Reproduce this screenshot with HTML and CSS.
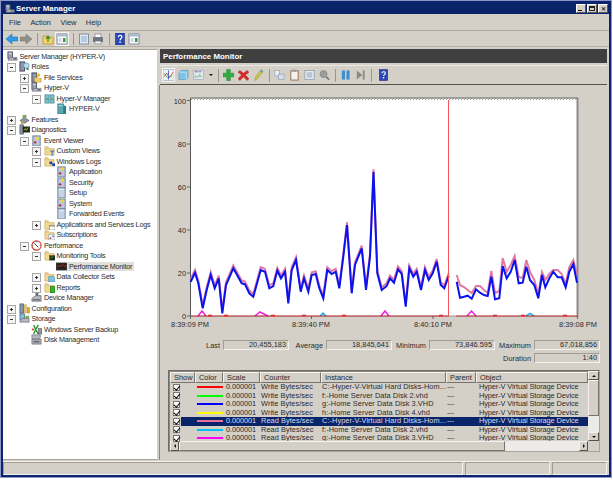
FILE: index.html
```html
<!DOCTYPE html>
<html lang="en">
<head>
<meta charset="utf-8">
<title>Server Manager</title>
<link rel="stylesheet" href="styles.css">
</head>
<body>
<svg class="defs" width="0" height="0" aria-hidden="true">
<defs>
<symbol id="i-server" viewBox="0 0 12 12"><rect x="1" y="1" width="5" height="7" fill="#9aa5b4" stroke="#556"/><rect x="2" y="2" width="3" height="1" fill="#eef"/><path d="M3 7h8v3H1z" fill="#b8bcc2" stroke="#667" stroke-width=".7"/><rect x="7" y="8" width="3" height="1" fill="#444"/></symbol>
<symbol id="i-roles" viewBox="0 0 12 12"><rect x="1" y="1" width="5" height="10" fill="#8b99ad" stroke="#445"/><circle cx="8" cy="5" r="3" fill="#bcd9ef" stroke="#4a86b8" stroke-width=".7"/><path d="M7 9l3-2 1 3z" fill="#3f8a3f"/></symbol>
<symbol id="i-files" viewBox="0 0 12 12"><rect x="1" y="1" width="5" height="10" fill="#8b99ad" stroke="#445"/><path d="M4 6h3l1 1h3v4H4z" fill="#f2cf6d" stroke="#b48a2c" stroke-width=".6"/><circle cx="8" cy="3.500" r="2" fill="#e9b93a"/></symbol>
<symbol id="i-mgr" viewBox="0 0 12 12"><rect x="1" y="2" width="4.500" height="4" fill="#7fc0c4" stroke="#3d8288" stroke-width=".7"/><rect x="6.500" y="2" width="4.500" height="4" fill="#7fc0c4" stroke="#3d8288" stroke-width=".7"/><rect x="1" y="7" width="4.500" height="4" fill="#7fc0c4" stroke="#3d8288" stroke-width=".7"/><rect x="6.500" y="7" width="4.500" height="4" fill="#7fc0c4" stroke="#3d8288" stroke-width=".7"/></symbol>
<symbol id="i-host" viewBox="0 0 12 12"><rect x="2" y="1" width="6" height="11" fill="#58a7ae" stroke="#2d6a70" stroke-width=".7"/><rect x="8" y="3" width="3" height="9" fill="#2f7d85"/><rect x="3" y="2.500" width="4" height="1" fill="#c7e6e8"/></symbol>
<symbol id="i-feat" viewBox="0 0 12 12"><path d="M1 7l5-3 5 3-5 3z" fill="#8d97a6" stroke="#445" stroke-width=".6"/><rect x="4" y="1" width="4" height="4" fill="#79a45d"/><rect x="2" y="8" width="3" height="3" fill="#c8a54a"/></symbol>
<symbol id="i-diag" viewBox="0 0 12 12"><rect x="1" y="1" width="4" height="10" fill="#8b99ad" stroke="#445" stroke-width=".7"/><rect x="4" y="3" width="8" height="6" fill="#1d2a1c" stroke="#555" stroke-width=".5"/><path d="M5 7l2-2 1 2 2-3" fill="none" stroke="#e8d23a" stroke-width=".8"/></symbol>
<symbol id="i-log" viewBox="0 0 12 12"><rect x="2" y="1" width="8" height="11" fill="#b9c9e0" stroke="#6d7c96"/><path d="M7 1l1 1.500 1.500.5-1 1 .2 1.500L7 5l-1.500.5.3-1.500-1-1 1.400-.5z" fill="#f6d52e"/><circle cx="4.500" cy="8" r="1.300" fill="#c8232c"/></symbol>
<symbol id="i-doc" viewBox="0 0 12 12"><rect x="2" y="1" width="8" height="11" fill="#c5d3e6" stroke="#6d7c96"/><rect x="3" y="2" width="6" height="1" fill="#edf3fa"/></symbol>
<symbol id="i-folder" viewBox="0 0 12 12"><path d="M1 3h4l1 1h5v7H1z" fill="#f4d98d" stroke="#c3a45a" stroke-width=".7"/><path d="M1 1.500h3l1 1.500H1z" fill="#f9e9b8" stroke="#c3a45a" stroke-width=".5"/></symbol>
<symbol id="i-fcustom" viewBox="0 0 12 12"><use href="#i-folder"/><path d="M6 6h6l-2.300 2.500V12H8.300V8.500z" fill="#5a8fb3"/></symbol>
<symbol id="i-fwin" viewBox="0 0 12 12"><use href="#i-folder"/><rect x="6" y="6" width="3" height="3" fill="#1c3fb0"/><rect x="9" y="8" width="3" height="3" fill="#1c3fb0"/></symbol>
<symbol id="i-fapp" viewBox="0 0 12 12"><use href="#i-folder"/><rect x="6" y="7" width="6" height="5" fill="#fff" stroke="#667" stroke-width=".6"/><rect x="6" y="7" width="6" height="1.300" fill="#99a"/></symbol>
<symbol id="i-fsub" viewBox="0 0 12 12"><use href="#i-folder"/><rect x="5" y="6" width="7" height="6" fill="#eef3fa" stroke="#8aa" stroke-width=".6"/><circle cx="7" cy="10" r="1" fill="#d33"/><circle cx="10" cy="8" r="1" fill="#38c"/></symbol>
<symbol id="i-fmon" viewBox="0 0 12 12"><use href="#i-folder"/><rect x="6" y="6" width="6" height="5" fill="#1d2a1c" stroke="#444" stroke-width=".5"/><path d="M7 9l1-1.500 1 1 1-1.500" fill="none" stroke="#5d5" stroke-width=".6"/></symbol>
<symbol id="i-fdcs" viewBox="0 0 12 12"><use href="#i-folder"/><path d="M5 6h5l2 2v4H5z" fill="#7cc1e8" stroke="#4788b0" stroke-width=".6"/></symbol>
<symbol id="i-frep" viewBox="0 0 12 12"><use href="#i-folder"/><rect x="7" y="5" width="5" height="7" fill="#2bb52b" stroke="#166a16" stroke-width=".6"/></symbol>
<symbol id="i-perf" viewBox="0 0 12 12"><circle cx="6" cy="6" r="5" fill="#fff" stroke="#c33" stroke-width="1.200"/><path d="M3.500 3.500L8 8" stroke="#333" stroke-width="1"/><path d="M6 1v2M1 6h2M9 6h2" stroke="#777" stroke-width=".6"/></symbol>
<symbol id="i-pm" viewBox="0 0 12 12"><rect x="0" y="2" width="12" height="8" fill="#26211f" stroke="#6b6b6b" stroke-width=".6"/><path d="M1 7l2-2 2 1 2-2 2 2 2-1" fill="none" stroke="#e33" stroke-width=".8"/></symbol>
<symbol id="i-dev" viewBox="0 0 12 12"><path d="M1 7l4-3h6v6H1z" fill="#b5bac1" stroke="#556" stroke-width=".7"/><path d="M5 1h3v3H5z" fill="#667"/><rect x="2" y="8" width="8" height="1" fill="#555"/></symbol>
<symbol id="i-conf" viewBox="0 0 12 12"><rect x="1" y="1" width="4" height="10" fill="#8b99ad" stroke="#445" stroke-width=".7"/><rect x="6" y="2" width="2" height="9" fill="#e8c54c" stroke="#a7842a" stroke-width=".4"/><rect x="9" y="5" width="2.500" height="6" fill="#e9a32b" stroke="#a7742a" stroke-width=".4"/></symbol>
<symbol id="i-stor" viewBox="0 0 12 12"><rect x="1" y="1" width="5" height="6" fill="#8bbfd9" stroke="#456" stroke-width=".7"/><path d="M1 8l3-2h7v4H1z" fill="#b3b9c1" stroke="#556" stroke-width=".6"/><rect x="7" y="3" width="4" height="3" fill="#6cb15a"/></symbol>
<symbol id="i-bak" viewBox="0 0 12 12"><path d="M3 1l2 5-2 5M8 1l-3 5 3 5" fill="none" stroke="#2e9c35" stroke-width="1.600"/><rect x="8" y="5" width="4" height="6" fill="#8f97a3" stroke="#444" stroke-width=".5"/><circle cx="2" cy="6" r="1.200" fill="#d33"/></symbol>
<symbol id="i-disk" viewBox="0 0 12 12"><rect x="1" y="1" width="9" height="4" fill="#b5bac1" stroke="#556" stroke-width=".6"/><rect x="1" y="6" width="10" height="5" fill="#a6acb4" stroke="#556" stroke-width=".6"/><rect x="3" y="8" width="6" height="1" fill="#444"/></symbol>
<symbol id="t-back" viewBox="0 0 12 12"><path d="M0 6l6-5v3h6v4H6v3z" fill="#2f9be6" stroke="#1b6eb0" stroke-width=".5"/></symbol>
<symbol id="t-fwd" viewBox="0 0 12 12"><path d="M12 6L6 1v3H0v4h6v3z" fill="#8f8f8a" stroke="#777" stroke-width=".5"/></symbol>
<symbol id="t-up" viewBox="0 0 12 12"><path d="M1 3h4l1 1h5v7H1z" fill="#f4d46d" stroke="#b08a2a" stroke-width=".7"/><path d="M6 9V4M4 6l2-3 2 3" fill="none" stroke="#2c8a2c" stroke-width="1.200"/></symbol>
<symbol id="t-con" viewBox="0 0 12 12"><rect x="1" y="1" width="10" height="10" fill="#fff" stroke="#7f8a96"/><rect x="1" y="1" width="10" height="2.500" fill="#a9bccf"/><rect x="7" y="5" width="2.500" height="4" fill="#2f9c45"/><rect x="2.500" y="5" width="3" height="4" fill="#cfd8e2"/></symbol>
<symbol id="t-list" viewBox="0 0 12 12"><rect x="1.500" y="1" width="9" height="10" fill="#dfe9f3" stroke="#80909f"/><rect x="3" y="3" width="6" height="6" fill="#b3cce2"/></symbol>
<symbol id="t-print" viewBox="0 0 12 12"><rect x="3" y="1" width="6" height="4" fill="#fff" stroke="#667" stroke-width=".6"/><rect x="1" y="4" width="10" height="5" fill="#6f7780"/><rect x="3" y="8" width="6" height="3" fill="#eee" stroke="#667" stroke-width=".5"/></symbol>
<symbol id="t-help" viewBox="0 0 12 12"><rect x="1.500" y="0" width="9" height="12" fill="#2b48b4" stroke="#1a2c7a" stroke-width=".6"/><path d="M4.300 4.200c0-2.400 3.600-2.400 3.600-.2 0 1.500-1.800 1.600-1.800 3.200" fill="none" stroke="#fff" stroke-width="1.200"/><rect x="5.300" y="8.300" width="1.500" height="1.500" fill="#fff"/></symbol>
</defs>
</svg>

<div class="window">
  <div class="titlebar">
    <svg class="title-icon"><use href="#i-server"/></svg>
    <span class="title-text">Server Manager</span>
    <span class="caps">
      <span class="cap"><i class="cap-min"></i></span>
      <span class="cap"><i class="cap-max"></i></span>
      <span class="cap cap-x">✕</span>
    </span>
  </div>
  <div class="menubar"><span>File</span><span>Action</span><span>View</span><span>Help</span></div>
  <div class="toolbar top-tools">
    <svg class="ti"><use href="#t-back"/></svg>
    <svg class="ti"><use href="#t-fwd"/></svg>
    <i class="sep"></i>
    <svg class="ti"><use href="#t-up"/></svg>
    <span class="pressed"><svg class="ti"><use href="#t-con"/></svg></span>
    <i class="sep"></i>
    <svg class="ti"><use href="#t-list"/></svg>
    <svg class="ti"><use href="#t-print"/></svg>
    <i class="sep"></i>
    <svg class="ti"><use href="#t-help"/></svg>
    <svg class="ti"><use href="#t-con"/></svg>
  </div>

  <div class="main">
    <div class="tree">
      <div class="node d0"><i class="tg"></i><svg class="ni"><use href="#i-server"/></svg><span>Server Manager (HYPER-V)</span></div>
      <div class="node d1"><i class="tg minus"></i><svg class="ni"><use href="#i-roles"/></svg><span>Roles</span></div>
      <div class="node d2"><i class="tg plus"></i><svg class="ni"><use href="#i-files"/></svg><span>File Services</span></div>
      <div class="node d2"><i class="tg minus"></i><svg class="ni"><use href="#i-server"/></svg><span>Hyper-V</span></div>
      <div class="node d3"><i class="tg minus"></i><svg class="ni"><use href="#i-mgr"/></svg><span>Hyper-V Manager</span></div>
      <div class="node d4"><i class="tg"></i><svg class="ni"><use href="#i-host"/></svg><span>HYPER-V</span></div>
      <div class="node d1"><i class="tg plus"></i><svg class="ni"><use href="#i-feat"/></svg><span>Features</span></div>
      <div class="node d1"><i class="tg minus"></i><svg class="ni"><use href="#i-diag"/></svg><span>Diagnostics</span></div>
      <div class="node d2"><i class="tg minus"></i><svg class="ni"><use href="#i-log"/></svg><span>Event Viewer</span></div>
      <div class="node d3"><i class="tg plus"></i><svg class="ni"><use href="#i-fcustom"/></svg><span>Custom Views</span></div>
      <div class="node d3"><i class="tg minus"></i><svg class="ni"><use href="#i-fwin"/></svg><span>Windows Logs</span></div>
      <div class="node d4"><i class="tg"></i><svg class="ni"><use href="#i-log"/></svg><span>Application</span></div>
      <div class="node d4"><i class="tg"></i><svg class="ni"><use href="#i-log"/></svg><span>Security</span></div>
      <div class="node d4"><i class="tg"></i><svg class="ni"><use href="#i-doc"/></svg><span>Setup</span></div>
      <div class="node d4"><i class="tg"></i><svg class="ni"><use href="#i-log"/></svg><span>System</span></div>
      <div class="node d4"><i class="tg"></i><svg class="ni"><use href="#i-doc"/></svg><span>Forwarded Events</span></div>
      <div class="node d3"><i class="tg plus"></i><svg class="ni"><use href="#i-fapp"/></svg><span>Applications and Services Logs</span></div>
      <div class="node d3"><i class="tg"></i><svg class="ni"><use href="#i-fsub"/></svg><span>Subscriptions</span></div>
      <div class="node d2"><i class="tg minus"></i><svg class="ni"><use href="#i-perf"/></svg><span>Performance</span></div>
      <div class="node d3"><i class="tg minus"></i><svg class="ni"><use href="#i-fmon"/></svg><span>Monitoring Tools</span></div>
      <div class="node d4"><i class="tg"></i><svg class="ni"><use href="#i-pm"/></svg><span class="current">Performance Monitor</span></div>
      <div class="node d3"><i class="tg plus"></i><svg class="ni"><use href="#i-fdcs"/></svg><span>Data Collector Sets</span></div>
      <div class="node d3"><i class="tg plus"></i><svg class="ni"><use href="#i-frep"/></svg><span>Reports</span></div>
      <div class="node d2"><i class="tg"></i><svg class="ni"><use href="#i-dev"/></svg><span>Device Manager</span></div>
      <div class="node d1"><i class="tg plus"></i><svg class="ni"><use href="#i-conf"/></svg><span>Configuration</span></div>
      <div class="node d1"><i class="tg minus"></i><svg class="ni"><use href="#i-stor"/></svg><span>Storage</span></div>
      <div class="node d2"><i class="tg"></i><svg class="ni"><use href="#i-bak"/></svg><span>Windows Server Backup</span></div>
      <div class="node d2"><i class="tg"></i><svg class="ni"><use href="#i-disk"/></svg><span>Disk Management</span></div>
    </div>

    <div class="pane">
      <div class="pane-head">Performance Monitor</div>
      <div class="toolbar pane-tools">
        <span class="pressed"><svg class="ti" viewBox="0 0 12 12"><rect x="0" y="0" width="12" height="12" fill="#eef3f8" stroke="#8ca0b5" stroke-width=".6"/><path d="M1 8l3-4 3 5 4-6" fill="none" stroke="#d33" stroke-width=".9"/><path d="M1 4l4 5 5-2" fill="none" stroke="#3a3" stroke-width=".9"/><path d="M6 1v10" stroke="#35b" stroke-width=".9"/></svg></span>
        <svg class="ti" viewBox="0 0 12 12"><path d="M1 3l3-2h7v8l-2 2H1z" fill="#7cc4ea" stroke="#4a90b8" stroke-width=".6"/><path d="M1 3h8v8" fill="none" stroke="#d5eefa" stroke-width=".7"/></svg>
        <svg class="ti" viewBox="0 0 12 12"><rect x="0.500" y="1" width="11" height="10" fill="#dfe8f2" stroke="#8ca0b5" stroke-width=".6"/><rect x="2" y="2" width="3" height="1" fill="#c36"/><rect x="6" y="2" width="3" height="1" fill="#58b"/><path d="M1 9l2-3 2 2 2-3 3 3" fill="#9cc69c"/></svg>
        <i class="caret"></i>
        <i class="sep"></i>
        <svg class="ti" viewBox="0 0 12 12"><path d="M4 0h4v4h4v4H8v4H4V8H0V4h4z" fill="#2fae3f" stroke="#1c7a2a" stroke-width=".5"/></svg>
        <svg class="ti" viewBox="0 0 12 12"><path d="M2 1l4 3 4-3 2 2-4 3 4 4-2 2-4-4-4 4-2-2 4-4-4-3z" fill="#d7262b" stroke="#a31a1e" stroke-width=".4"/></svg>
        <svg class="ti" viewBox="0 0 12 12"><path d="M9 0l2 2-6 8-3 2 .5-3.500z" fill="#c9c94a" stroke="#8e8c33" stroke-width=".5"/><path d="M9 0l2 2-1.500 2-2-2z" fill="#6f9bd0"/></svg>
        <i class="sep"></i>
        <svg class="ti" viewBox="0 0 12 12"><rect x="1" y="1" width="5" height="6" fill="#eef1f5" stroke="#8fa0b4" stroke-width=".7"/><rect x="5" y="5" width="6" height="6" fill="#d6dee8" stroke="#8fa0b4" stroke-width=".7"/></svg>
        <svg class="ti" viewBox="0 0 12 12"><rect x="2" y="1.500" width="8" height="10" fill="#f2f2f2" stroke="#94653a" stroke-width="1"/><rect x="4" y="0" width="4" height="2.500" fill="#8fa0b4"/></svg>
        <svg class="ti" viewBox="0 0 12 12"><rect x="1" y="1" width="10" height="10" fill="#e7ecf2" stroke="#8c98a6" stroke-width=".8"/><rect x="3" y="3" width="6" height="6" fill="#b7c6d6"/></svg>
        <svg class="ti" viewBox="0 0 12 12"><circle cx="5" cy="5" r="3.800" fill="#9b9b9b" stroke="#8a8a8a"/><path d="M8 8l3 3" stroke="#777" stroke-width="1.800"/></svg>
        <i class="sep"></i>
        <svg class="ti" viewBox="0 0 12 12"><rect x="2" y="1" width="3.500" height="10" fill="#3f8fd0"/><rect x="7" y="1" width="3.500" height="10" fill="#3f8fd0"/></svg>
        <svg class="ti" viewBox="0 0 12 12"><path d="M2 1l6 5-6 5z" fill="#8a8a86"/><rect x="8.500" y="1" width="2" height="10" fill="#8a8a86"/></svg>
        <i class="sep"></i>
        <svg class="ti"><use href="#t-help"/></svg>
      </div>

      <div class="pane-body">
        <svg class="chart" viewBox="160 85 447 250">
          <defs>
            <pattern id="hatch" width="3" height="3" patternUnits="userSpaceOnUse"><rect width="3" height="3" fill="#fff"/><path d="M0 3L3 0" stroke="#888" stroke-width=".8"/></pattern>
            <polyline id="seg1" points="190.700,281.700 195,272.700 198.300,283.300 202.700,308.300 206.700,290 210.700,275 214.700,288.300 218.700,278.300 222.300,313.300 226,285 233.300,268.300 241.700,283.300 245,284.300 249.300,293.300 253.300,296.700 260.700,270 265,271.700 269.300,288.300 273.300,286 277.300,270.700 281,278.300 285,271.700 288.300,303.300 291.700,270 296,260 300.700,291.700 304,278.300 308.300,291.700 311.700,275 315.700,274 319.300,288.300 323.300,298.300 327.300,270 331.700,274 335.700,271.700 339.300,288.300 343.300,256.700 347,225 351.700,293.300 355,265 361.700,248.300 366,290 370,256.700 373.500,172 377.300,273.300 381.700,290 386.700,286 390,278.300 394,282.700 398,269.300 401.700,274 405.700,306.700 409.300,268.300 413.300,276.700 416.700,271.700 421,290 425,270 428.700,280 432.700,273.300 436.700,261.700 440.700,285 444.300,288.300 448.700,276"/>
          </defs>
          <rect x="191" y="98" width="387" height="2" fill="url(#hatch)"/>
          <rect x="191" y="100" width="386" height="216" fill="#fff"/>
          <path d="M190.500 98V317" class="axis"/>
          <path d="M190.500 98H578" class="axis-thin"/>
          <path d="M577.500 98V317" class="axis-right"/>
          <path d="M187 100.500h4M187 144h4M187 187h4M187 230h4M187 273h4M187 316h4M190.500 316v3M311.500 316v3M433 316v3M577.500 316v3" class="axis-thin"/>
          <use href="#seg1" class="line-pink" transform="translate(0 -2.800)"/>
          <polyline class="line-pink" points="456.700,275 460,285 464,287 467.700,290 471.700,293 476,286 480,286 484,290 487.700,293 491.300,271 495,293 499.300,291 502.700,258 506.700,272 510.700,265 514.700,256 518.700,277 522.700,278 526.300,260 530,272 534.300,280 538.300,294 542,272 545.300,280 549.300,274 553.300,270 557.700,270 561.700,274 565.700,284 569.300,267 573.300,260 577,274"/>
          <use href="#seg1" class="line-blue"/>
          <polyline class="line-blue" points="456.700,281.700 460,297.700 464,296.700 467.700,295.700 471.700,298.700 476,289.300 480,292.700 484,295 487.700,296 491.300,276.700 495,299.300 499.300,298.300 502.700,266 506.700,278.300 510.700,271.700 514.700,260 518.700,283.300 522.700,282.700 526.300,266.700 530,280 534.300,285 538.300,298.300 542,275 545.300,287.300 549.300,278.300 553.300,271.700 557.700,277.300 561.700,277.300 565.700,287.300 569.300,271.700 573.300,264 577,282.700"/>
          <path d="M198 316l4-5 4 5M255 316l5-4 8 4M381 316l4-5 4 5M467 316l4.500-5 4.500 5" class="hump-m"/>
          <path d="M320 316l3-3 3 3M526 316l4-2.500 4 2.500" class="hump-c"/>
          <path d="M191 316H449M456 316H577" class="base"/>
          <path d="M449 316H456" class="base-gap"/>
          <path d="M208 315.500h4M224 315.500h4M271 315.500h4M302 315.500h4M342 315.500h4M439 315.500h4M493 315.500h4M521 315.500h4M563 315.500h4" class="base-red"/>
          <path d="M448.500 100V316" class="cursor"/>
          <text x="186" y="104" class="ylab">100</text>
          <text x="186" y="147" class="ylab">80</text>
          <text x="186" y="190" class="ylab">60</text>
          <text x="186" y="233" class="ylab">40</text>
          <text x="186" y="276" class="ylab">20</text>
          <text x="186" y="319" class="ylab">0</text>
          <text x="190" y="327" class="xlab">8:39:09 PM</text>
          <text x="311" y="327" class="xlab">8:39:40 PM</text>
          <text x="433" y="327" class="xlab">8:40:10 PM</text>
          <text x="578" y="327" class="xlab">8:39:08 PM</text>
        </svg>

        <div class="stats">
          <div class="stat"><span>Last</span><b>20,455,183</b></div>
          <div class="stat"><span>Average</span><b>18,845,641</b></div>
          <div class="stat"><span>Minimum</span><b>73,846.595</b></div>
          <div class="stat"><span>Maximum</span><b>67,018,856</b></div>
          <div class="stat stat-last"><span>Duration</span><b>1:40</b></div>
        </div>

        <div class="list">
          <div class="list-top">
            <div class="list-main">
              <div class="grid head"><span>Show</span><span>Color</span><span>Scale</span><span>Counter</span><span>Instance</span><span>Parent</span><span>Object</span></div>
              <div class="grid row"><i class="chk"></i><em class="sw red"></em><span>0.000001</span><span>Write Bytes/sec</span><span>C:-Hyper-V-Virtual Hard Disks-Hom...</span><span>---</span><span>Hyper-V Virtual Storage Device</span></div>
              <div class="grid row"><i class="chk"></i><em class="sw lime"></em><span>0.000001</span><span>Write Bytes/sec</span><span>f:-Home Server Data Disk 2.vhd</span><span>---</span><span>Hyper-V Virtual Storage Device</span></div>
              <div class="grid row"><i class="chk"></i><em class="sw blue"></em><span>0.000001</span><span>Write Bytes/sec</span><span>g:-Home Server Data Disk 3.VHD</span><span>---</span><span>Hyper-V Virtual Storage Device</span></div>
              <div class="grid row"><i class="chk"></i><em class="sw yellow"></em><span>0.000001</span><span>Write Bytes/sec</span><span>h:-Home Server Data Disk 4.vhd</span><span>---</span><span>Hyper-V Virtual Storage Device</span></div>
              <div class="grid row sel"><i class="chk"></i><em class="sw pink"></em><span>0.000001</span><span>Read Bytes/sec</span><span>C:-Hyper-V-Virtual Hard Disks-Hom...</span><span>---</span><span>Hyper-V Virtual Storage Device</span></div>
              <div class="grid row"><i class="chk"></i><em class="sw cyan"></em><span>0.000001</span><span>Read Bytes/sec</span><span>f:-Home Server Data Disk 2.vhd</span><span>---</span><span>Hyper-V Virtual Storage Device</span></div>
              <div class="grid row"><i class="chk"></i><em class="sw magenta"></em><span>0.000001</span><span>Read Bytes/sec</span><span>g:-Home Server Data Disk 3.VHD</span><span>---</span><span>Hyper-V Virtual Storage Device</span></div>
            </div>
            <div class="vscroll">
              <span class="sbtn"><i class="arr-up"></i></span>
              <span class="vthumb"></span>
              <span class="vtrack"></span>
              <span class="sbtn"><i class="arr-down"></i></span>
            </div>
          </div>
          <div class="hscroll">
            <span class="sbtn"><i class="arr-left"></i></span>
            <span class="hthumb"></span>
            <span class="htrack"></span>
            <span class="sbtn"><i class="arr-right"></i></span>
            <span class="corner"></span>
          </div>
        </div>
      </div>
    </div>
  </div>

  <div class="statusbar"><span class="cell c1"></span><span class="cell c2"></span><span class="cell c3"></span></div>
</div>
</body>
</html>
```
FILE: styles.css
```css
* { box-sizing: border-box; }
html, body { margin: 0; padding: 0; background: #fff; }
body { font-family: "Liberation Sans", Arial, sans-serif; font-size: 7.4px; color: #2a2a2a; width: 613px; height: 480px; overflow: hidden; }
.defs { position: absolute; }
svg { display: block; flex: none; }
i, em { font-style: normal; }

.window { width: 612px; height: 478px; border: 3px solid #0c2470; outline: 1px solid #8d97c8; outline-offset: -1px; background: #d4d0c8; display: flex; flex-direction: column; }

.titlebar { height: 11px; background: #0a246a; display: flex; align-items: center; color: #fff; font-weight: bold; font-size: 7.9px; padding-left: 2px; }
.title-icon { width: 10px; height: 10px; margin-right: 1px; }
.title-text { flex: 1; padding-left: 0; }
.caps { display: flex; gap: 1px; padding-right: 1px; }
.cap { width: 10px; height: 9px; background: #d4d0c8; border: 1px solid; border-color: #fff #555 #555 #fff; display: flex; align-items: center; justify-content: center; color: #222; font-size: 6px; line-height: 1; position: relative; }
.cap-min { width: 4px; height: 1.500px; background: #111; margin-top: 4px; margin-right: 2px; }
.cap-max { width: 6px; height: 5px; border: 1px solid #222; border-top-width: 2px; }

.menubar { height: 17px; border-bottom: 1px solid #aaa69e; display: flex; align-items: center; padding-left: 6px; gap: 9.500px; font-size: 7.400px; }
.toolbar { display: flex; align-items: center; }
.top-tools { height: 16px; padding-left: 3px; gap: 2px; border-bottom: 1px solid #b3afa7; }
.ti { width: 11px; height: 11px; }
.top-tools .ti { width: 12px; height: 12px; }
.sep { width: 1px; height: 12px; background: #9a968e; margin: 0 2.500px; flex: none; }
.pressed { display: block; background: #e8e6e0; box-shadow: 0 0 0 1px #f4f3ef; }

.main { flex: none; height: 411px; margin-top: 2px; display: flex; }

.tree { width: 154px; background: #fff; border: 1px solid #a8a49c; border-width: 1px 0 1px 0; padding-top: 1px; overflow: hidden; font-size: 7.200px; letter-spacing: -.2px; }
.node { height: 10.500px; display: flex; align-items: center; white-space: nowrap; }
.d0 { padding-left: 4px; margin-left: -13px; }
.d0 .tg { width: 12.500px; }
.d1 { padding-left: 4px; }
.d2 { padding-left: 16.500px; }
.d3 { padding-left: 29px; }
.d4 { padding-left: 41.500px; }
.tg { width: 11.500px; height: 7px; flex: none; position: relative; }
.plus::before, .minus::before { content: ""; position: absolute; left: 0; top: 0; width: 7px; height: 7px; border: 1px solid #a6a6a6; background-color: #f6f6f6; background-repeat: no-repeat; background-position: center; }
.minus::before { background-image: linear-gradient(#333, #333); background-size: 3px 1px; }
.plus::before { background-image: linear-gradient(#333, #333), linear-gradient(#333, #333); background-size: 3px 1px, 1px 3px; }
.ni { width: 11px; height: 11px; margin-right: 2px; }
.current { background: #e2e0da; padding: 0 2px; margin-left: -2px; }

.pane { width: 447px; margin-left: 3px; display: flex; flex-direction: column; }
.pane-head { height: 14px; flex: none; background: #3f3f3f; color: #fff; font-weight: bold; font-size: 7.9px; display: flex; align-items: center; padding-left: 3px; }
.pane-tools { height: 20px; flex: none; margin-top: 2px; padding-left: 3px; gap: 4px; border-bottom: 1px solid #55524c; border-top: 1px solid #ebe9e4; }
.pane-tools .ti { width: 11px; height: 12px; }
.pane-tools .sep { height: 13px; margin: 0 0 0 1px; }
.pane-tools .sep:last-of-type { margin-right: 2px; }
.caret { width: 0; height: 0; border: 2px solid transparent; border-top: 2.500px solid #111; border-bottom: 0; margin-left: 1px; }
.pane-body { flex: 1; border-left: 1px solid #888; display: flex; flex-direction: column; min-height: 0; margin-left: -1px; }

.chart { width: 447px; height: 250px; font-size: 7.4px; }
.axis { stroke: #555; stroke-width: 1; fill: none; }
.axis-thin { stroke: #666; stroke-width: 1; fill: none; }
.axis-right { stroke: #8a8a8a; stroke-width: 2; fill: none; }
.line-pink { fill: none; stroke: #e07aa3; stroke-width: 2; }
.line-blue { fill: none; stroke: #0a12ee; stroke-width: 2; }
.hump-m { fill: none; stroke: #f01fe0; stroke-width: 1.500; }
.hump-c { fill: none; stroke: #22b6ec; stroke-width: 1.500; }
.base { stroke: #a8121f; stroke-width: 1; fill: none; }
.base-gap { stroke: #999; stroke-width: 1; fill: none; }
.base-red { stroke: #f01c24; stroke-width: 1.500; fill: none; }
.cursor { stroke: #f4565c; stroke-width: 1; fill: none; }
.ylab { text-anchor: end; fill: #2a2a2a; font-family: "Liberation Sans", Arial, sans-serif; }
.xlab { text-anchor: middle; fill: #2a2a2a; font-family: "Liberation Sans", Arial, sans-serif; }

.stats { margin: 5px 0 0 26px; display: grid; grid-template-columns: repeat(4, 103px); row-gap: 3px; flex: none; }
.stat { display: flex; align-items: center; height: 10px; }
.stat span { width: 34px; text-align: right; margin-right: 3px; flex: none; }
.stat b { flex: none; width: 66px; height: 10px; border: 1px solid; border-color: #a09c94 #f4f3ef #f4f3ef #a09c94; font-weight: normal; text-align: right; padding-right: 2px; line-height: 8px; }
.stat:nth-child(4), .stat-last { margin-left: 2px; }
.stat-last { grid-column: 4; }

.list { margin: 7px 0 0 8px; width: 432px; height: 82px; border: 1px solid; border-color: #6f6c66 #a8a49c #a8a49c #6f6c66; box-shadow: inset 1px 1px 0 #8c8880; flex: none; display: flex; flex-direction: column; }
.list-top { display: flex; flex: 1; min-height: 0; }
.list-main { flex: 1; min-width: 0; padding-left: 1px; }
.grid { display: grid; grid-template-columns: 25px 28px 37px 61px 125px 30px 1fr; white-space: nowrap; }
.head { height: 11px; margin-top: 1px; }
.head span { background: #d4d0c8; border: 1px solid; border-color: #f4f3ef #77746e #77746e #f4f3ef; padding-left: 3px; line-height: 9px; overflow: hidden; }
.row { height: 8.500px; line-height: 8.500px; align-items: center; letter-spacing: -.1px; }
.row span { padding-left: 3px; overflow: hidden; height: 8.500px; }
.row span:nth-of-type(2), .row span:nth-of-type(3) { padding-left: 1px; letter-spacing: .05px; }
.row span:first-of-type { padding-left: 3px; }
.row span:nth-of-type(4) { padding-left: 1px; }
.chk { width: 7px; height: 7px; margin-left: 3px; background: #fff; border: 1px solid #777; position: relative; }
.chk::after { content: ""; position: absolute; left: 1px; top: -1px; width: 2.500px; height: 5px; border: solid #111; border-width: 0 1.500px 1.500px 0; transform: rotate(40deg); }
.sw { display: block; height: 8.500px; position: relative; }
.sw::after { content: ""; position: absolute; left: 3px; right: 0; top: 3px; height: 2px; background: currentColor; }
.red { color: #f00; } .lime { color: #0f0; } .blue { color: #00f; } .yellow { color: #ff0; } .pink { color: #e96f9d; } .cyan { color: #00bfff; } .magenta { color: #f0f; }
.sel { background: linear-gradient(#0a246a, #0a246a) 11px 0 no-repeat; }
.sel span { color: #d8ddf0; }
.chk + .sw { margin-left: -1px; }

.vscroll { width: 11px; flex: none; display: flex; flex-direction: column; }
.sbtn { flex: none; width: 9px; height: 9px; background: #d4d0c8; border: 1px solid; border-color: #f4f3ef #55524c #55524c #f4f3ef; display: flex; align-items: center; justify-content: center; }
.vscroll .sbtn { width: 11px; }
.vthumb { height: 36px; flex: none; background: #d4d0c8; border: 1px solid; border-color: #f4f3ef #77746e #77746e #f4f3ef; }
.vtrack { flex: 1; background: #ecebe7; }
.arr-up, .arr-down, .arr-left, .arr-right { width: 0; height: 0; border: 2px solid transparent; }
.arr-up { border-bottom-color: #111; border-top: 0; }
.arr-down { border-top-color: #111; border-bottom: 0; }
.arr-left { border-right-color: #111; border-left: 0; }
.arr-right { border-left-color: #111; border-right: 0; }
.hscroll { height: 10px; flex: none; display: flex; padding-left: 1px; }
.hscroll .sbtn { height: 10px; }
.hthumb { width: 326px; flex: none; background: #d4d0c8; border: 1px solid; border-color: #f4f3ef #77746e #77746e #f4f3ef; }
.htrack { flex: 1; background: #ecebe7; }
.corner { width: 11px; flex: none; background: #d4d0c8; }

.statusbar { flex: none; height: 14px; margin-top: 1px; display: flex; gap: 2px; padding-right: 2px; border-top: 1px solid #f4f3ef; }
.cell { display: block; height: 13px; border: 1px solid; border-color: #a09c94 #f4f3ef #f4f3ef #a09c94; }
.c1 { width: 460px; } .c2 { width: 85px; } .c3 { flex: 1; }
```
